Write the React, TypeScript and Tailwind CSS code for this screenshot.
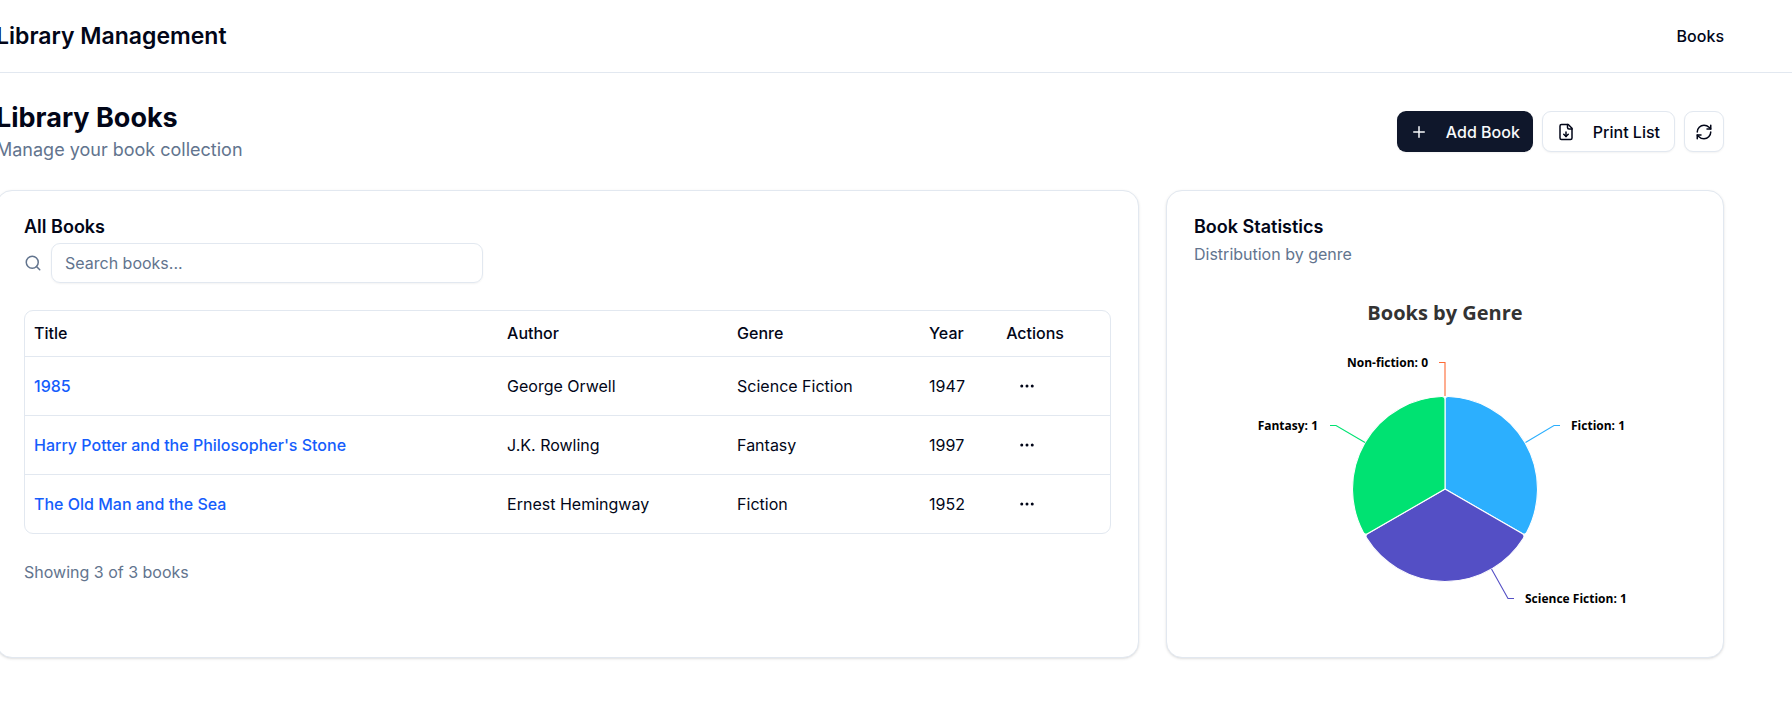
import React from "react";
import { Ellipsis, Plus, RefreshCw, Search } from "lucide-react";

const books = [
  { title: "1985", author: "George Orwell", genre: "Science Fiction", year: 1947 },
  { title: "Harry Potter and the Philosopher's Stone", author: "J.K. Rowling", genre: "Fantasy", year: 1997 },
  { title: "The Old Man and the Sea", author: "Ernest Hemingway", genre: "Fiction", year: 1952 },
];

const CX = 251;
const CY = 199;
const RADIUS = 92.5;
const CORNER = 3.4;

function point(angle: number, r: number) {
  const a = ((angle - 90) * Math.PI) / 180;
  return `${(CX + r * Math.cos(a)).toFixed(2)} ${(CY + r * Math.sin(a)).toFixed(2)}`;
}

function slicePath(start: number, end: number) {
  const inset = (CORNER / RADIUS) * (180 / Math.PI);
  return [
    `M ${CX} ${CY}`,
    `L ${point(start, RADIUS - CORNER)}`,
    `Q ${point(start, RADIUS)} ${point(start + inset, RADIUS)}`,
    `A ${RADIUS} ${RADIUS} 0 0 1 ${point(end - inset, RADIUS)}`,
    `Q ${point(end, RADIUS)} ${point(end, RADIUS - CORNER)}`,
    "Z",
  ].join(" ");
}

const slices = [
  { color: "#2caffe", start: 0, end: 120 },
  { color: "#544fc5", start: 120, end: 240 },
  { color: "#00e272", start: 240, end: 360 },
];

const labels = [
  { text: "Fiction: 1", color: "#2caffe", line: "M331.5 152.5L360 135.5H366", x: 377, y: 140, anchor: "start" as const },
  { text: "Science Fiction: 1", color: "#544fc5", line: "M297.5 279L314 308.5H320", x: 331, y: 313, anchor: "start" as const },
  { text: "Fantasy: 1", color: "#00e272", line: "M171 152.5L142 135.5H136", x: 124, y: 140, anchor: "end" as const },
  { text: "Non-fiction: 0", color: "#fe6a35", line: "M251 106V72.5H245", x: 234, y: 77, anchor: "end" as const },
];

function GenreChart() {
  return (
    <svg
      viewBox="0 0 502 340"
      className="h-[340px] w-full font-['Open_Sans','Noto_Sans',sans-serif] font-bold"
      role="img"
      aria-label="Books by Genre"
    >
      <text x={CX} y="30" textAnchor="middle" fill="#333333" className="text-[20px]">
        Books by Genre
      </text>
      {slices.map((s) => (
        <path key={s.color} d={slicePath(s.start, s.end)} fill={s.color} stroke="#ffffff" strokeWidth="1.1" strokeLinejoin="round" />
      ))}
      {labels.map((l) => (
        <g key={l.text}>
          <path d={l.line} fill="none" stroke={l.color} strokeWidth="1.1" />
          <text x={l.x} y={l.y} textAnchor={l.anchor} fill="#000000" className="text-[12px]">
            {l.text}
          </text>
        </g>
      ))}
    </svg>
  );
}

function FileDownIcon() {
  return (
    <svg
      width="18"
      height="18"
      viewBox="0 0 24 24"
      fill="none"
      stroke="currentColor"
      strokeWidth="2"
      strokeLinecap="round"
      strokeLinejoin="round"
      aria-hidden="true"
    >
      <path d="M15 2H6a2 2 0 0 0-2 2v16a2 2 0 0 0 2 2h12a2 2 0 0 0 2-2V7Z" />
      <path d="M14 2v4a2 2 0 0 0 2 2h4" />
      <path d="M12 18v-6" />
      <path d="m9 15 3 3 3-3" />
    </svg>
  );
}

const cardClass = "rounded-[16px] border border-[#e2e8f0] bg-white p-[27px] shadow-sm";
const outlineButton =
  "flex h-[41px] items-center justify-center rounded-[9px] border border-[#e2e8f0] bg-white font-medium shadow-xs";

export default function App() {
  return (
    <div className="overflow-x-hidden bg-white font-['Inter',sans-serif] text-[16px] leading-[22px] text-[#020618]">
      <header className="border-b border-[#e2e8f0]">
        <div className="-ml-1 mr-17 flex h-[72px] items-center justify-between">
          <a href="#" className="text-[23px] leading-[32px] font-semibold">
            Library Management
          </a>
          <nav>
            <a href="#books" className="font-medium">
              Books
            </a>
          </nav>
        </div>
      </header>

      <main className="-ml-1 mr-17 flex flex-col gap-[27px] py-[27px]">
        <div className="flex items-center justify-between">
          <div>
            <h1 className="text-[27px] leading-[36px] font-bold">Library Books</h1>
            <p className="text-[18px] leading-[27px] text-[#62748e]">Manage your book collection</p>
          </div>
          <div className="flex gap-[9px]">
            <button
              type="button"
              className="flex h-[41px] items-center gap-[18px] rounded-[9px] bg-[#0f172b] px-[13px] font-medium text-[#f8fafc] shadow-xs"
            >
              <Plus size={18} />
              Add Book
            </button>
            <button type="button" className={`${outlineButton} gap-[18px] px-[14px]`}>
              <FileDownIcon />
              Print List
            </button>
            <button type="button" aria-label="Refresh" className={`${outlineButton} w-[40px]`}>
              <RefreshCw size={18} />
            </button>
          </div>
        </div>

        <div className="grid grid-cols-3 gap-[27px]">
          <section className={`${cardClass} col-span-2`}>
            <h2 className="text-[18px] leading-[18px] font-semibold">All Books</h2>
            <div className="mt-[7px] flex items-center gap-[9px]">
              <label htmlFor="book-search" className="text-[#62748e]">
                <Search size={18} aria-label="Search books" />
              </label>
              <input
                id="book-search"
                type="text"
                placeholder="Search books..."
                className="h-[40px] w-full max-w-[432px] rounded-[9px] border border-[#e2e8f0] px-[13px] shadow-xs outline-none placeholder:text-[#62748e]"
              />
            </div>

            <div className="mt-[27px] overflow-hidden rounded-[9px] border border-[#e2e8f0]">
              <table className="w-full table-fixed text-left">
                <colgroup>
                  <col className="w-[43.6%]" />
                  <col className="w-[21.2%]" />
                  <col className="w-[17.7%]" />
                  <col className="w-[7.1%]" />
                  <col className="w-[10.4%]" />
                </colgroup>
                <thead>
                  <tr className="h-[45px] border-b border-[#e2e8f0]">
                    {["Title", "Author", "Genre", "Year", "Actions"].map((h) => (
                      <th key={h} scope="col" className="px-[9px] font-medium">
                        {h}
                      </th>
                    ))}
                  </tr>
                </thead>
                <tbody>
                  {books.map((b) => (
                    <tr key={b.title} className="border-b border-[#e2e8f0] last:border-b-0">
                      <td className="p-[9px] font-medium">
                        <a href="#book" className="text-[#155dfc]">
                          {b.title}
                        </a>
                      </td>
                      <td className="p-[9px]">{b.author}</td>
                      <td className="p-[9px]">{b.genre}</td>
                      <td className="p-[9px]">{b.year}</td>
                      <td className="p-[9px]">
                        <button
                          type="button"
                          aria-label={`Actions for ${b.title}`}
                          className="flex h-[40px] w-[41px] items-center justify-center rounded-[9px]"
                        >
                          <Ellipsis size={18} />
                        </button>
                      </td>
                    </tr>
                  ))}
                </tbody>
              </table>
            </div>
            <p className="mt-[27px] text-[#62748e]">Showing 3 of 3 books</p>
          </section>

          <section className={cardClass}>
            <h2 className="text-[18px] leading-[18px] font-semibold">Book Statistics</h2>
            <p className="mt-[7px] text-[#62748e]">Distribution by genre</p>
            <div className="mt-[25px]">
              <GenreChart />
            </div>
          </section>
        </div>
      </main>
    </div>
  );
}
